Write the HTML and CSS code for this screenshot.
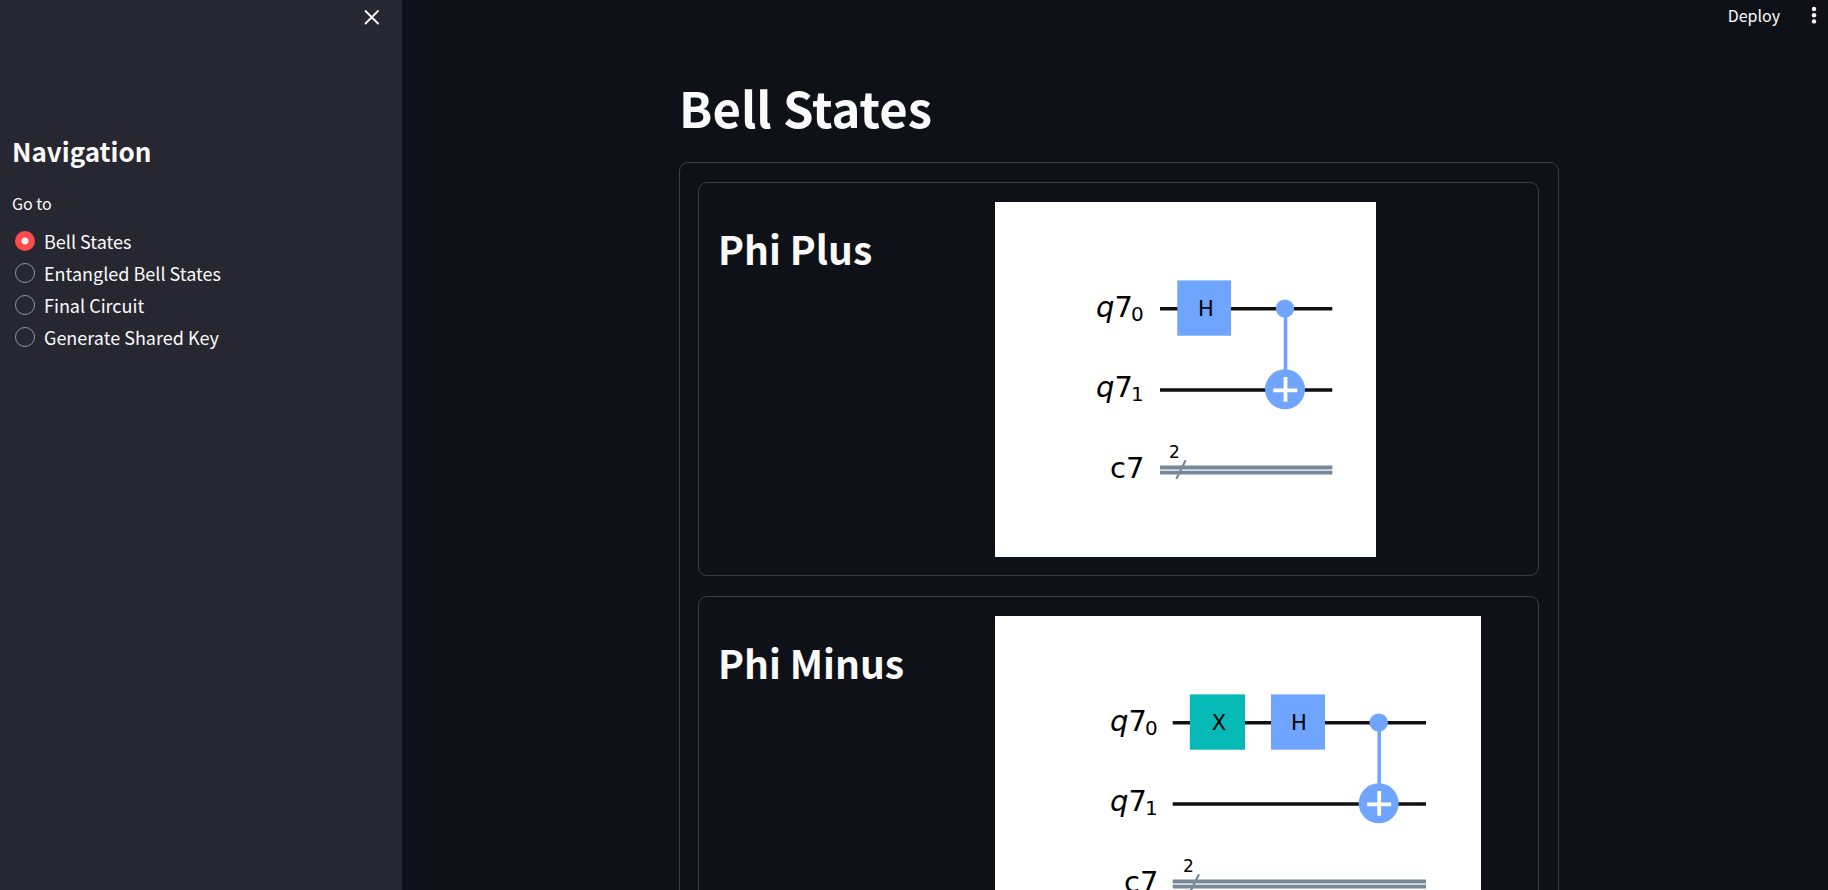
FILE: index.html
```html
<!DOCTYPE html>
<html lang="en">
<head>
<meta charset="utf-8">
<meta name="viewport" content="width=device-width, initial-scale=1">
<title>Bell States</title>
<link rel="stylesheet" href="styles.css">
</head>
<body>
<div class="app">
  <aside class="sidebar">
    <div class="sidebar-head">
      <button class="icon-button" type="button" aria-label="Close sidebar">
        <svg width="16" height="16" viewBox="0 0 16 16" fill="none" stroke="currentColor" stroke-width="1.8" stroke-linecap="round"><path d="M1.5 2 14 14.5M14 2 1.5 14.5"/></svg>
      </button>
    </div>
    <h2 class="nav-title">Navigation</h2>
    <fieldset class="nav-group">
      <legend class="nav-legend">Go to</legend>
      <label class="nav-option"><input class="nav-radio" type="radio" name="page" checked>Bell States</label>
      <label class="nav-option"><input class="nav-radio" type="radio" name="page">Entangled Bell States</label>
      <label class="nav-option"><input class="nav-radio" type="radio" name="page">Final Circuit</label>
      <label class="nav-option"><input class="nav-radio" type="radio" name="page">Generate Shared Key</label>
    </fieldset>
  </aside>
  <div class="page">
    <header class="toolbar">
      <button class="deploy" type="button">Deploy</button>
      <button class="icon-button" type="button" aria-label="Main menu">
        <svg width="6" height="18" viewBox="0 0 6 18" fill="currentColor"><circle cx="3" cy="3" r="2.2"/><circle cx="3" cy="9.2" r="2.2"/><circle cx="3" cy="15.4" r="2.2"/></svg>
      </button>
    </header>
    <main class="content">
      <h1 class="title">Bell States</h1>
      <div class="panel">
        <section class="card">
          <h2 class="card-title">Phi Plus</h2>
          <svg class="circuit" width="381" height="355" viewBox="0 0 381 355" role="img" aria-label="Phi Plus circuit">
            <path class="wire" d="M165 106.7H337.3M165 188H337.3"/>
            <path class="bus-fill" d="M165 268H337.3"/>
            <path class="bus" d="M165 265.4H337.3M165 270.7H337.3"/>
            <path class="slash" d="M181.3 277 190.6 258.3"/>
            <rect class="gate-h" x="182.3" y="78.4" width="53.7" height="55.3"/>
            <path class="control" d="M290.5 106.7V188"/>
            <circle class="gate-h" cx="290" cy="106.6" r="9.2"/>
            <circle class="gate-h" cx="290" cy="187.3" r="20"/>
            <path class="plus" d="M278.3 188.3H302.3M290.5 175V199.8"/>
            <text class="label" x="101" y="115"><tspan class="var">q</tspan>7</text>
            <text class="sub" x="136" y="119">0</text>
            <text class="label" x="101" y="195"><tspan class="var">q</tspan>7</text>
            <text class="sub" x="136" y="199">1</text>
            <text class="label" x="115" y="276">c7</text>
            <text class="count" x="174" y="256">2</text>
            <text class="gate-label" x="211" y="114">H</text>
          </svg>
        </section>
        <section class="card">
          <h2 class="card-title">Phi Minus</h2>
          <svg class="circuit" width="486" height="355" viewBox="0 0 486 355" role="img" aria-label="Phi Minus circuit">
            <path class="wire" d="M177.7 106.7H431M177.7 188H431"/>
            <path class="bus-fill" d="M177.7 268H431"/>
            <path class="bus" d="M177.7 265.4H431M177.7 270.7H431"/>
            <path class="slash" d="M194.6 277 204 258.3"/>
            <rect class="gate-x" x="194.8" y="78.4" width="55.2" height="55.3"/>
            <rect class="gate-h" x="276" y="78.4" width="54" height="55.3"/>
            <path class="control" d="M384.2 106.7V188"/>
            <circle class="gate-h" cx="383.7" cy="106.6" r="9.2"/>
            <circle class="gate-h" cx="383.7" cy="187.3" r="20"/>
            <path class="plus" d="M372.2 188.3H396.2M384.2 175V199.8"/>
            <text class="label" x="115" y="115"><tspan class="var">q</tspan>7</text>
            <text class="sub" x="150" y="119">0</text>
            <text class="label" x="115" y="195"><tspan class="var">q</tspan>7</text>
            <text class="sub" x="150" y="199">1</text>
            <text class="label" x="129" y="276">c7</text>
            <text class="count" x="188" y="256">2</text>
            <text class="gate-label" x="224" y="114">X</text>
            <text class="gate-label" x="304" y="114">H</text>
          </svg>
        </section>
      </div>
    </main>
  </div>
</div>
</body>
</html>
```
FILE: styles.css
```css
* {
  box-sizing: border-box;
}

body {
  margin: 0;
  background: #0e1117;
  color: #fafafa;
  font-family: "Noto Sans CJK SC", "Noto Sans", sans-serif;
  font-size: 18px;
}

h1,
h2 {
  margin: 0;
}

.app {
  display: flex;
  height: 100vh;
}

.sidebar {
  flex: 0 0 22%;
  padding: 0 12px;
  background: #262730;
}

.sidebar-head {
  display: flex;
  justify-content: flex-end;
  height: 127px;
  padding: 5px 10px;
}

.icon-button {
  display: flex;
  align-items: center;
  justify-content: center;
  height: 24px;
  padding: 0;
  border: 0;
  background: none;
  color: inherit;
  cursor: pointer;
}

.nav-title {
  font-size: 26px;
  font-weight: 700;
  line-height: 48px;
}

.nav-group {
  display: flex;
  flex-direction: column;
  margin: 0;
  padding: 0;
  border: 0;
}

.nav-legend {
  padding: 16px 0 10px;
  font-size: 16px;
  line-height: 24px;
}

.nav-option {
  display: flex;
  align-items: center;
  gap: 9px;
  padding-left: 3px;
  line-height: 32px;
  cursor: pointer;
}

.nav-radio {
  appearance: none;
  width: 20px;
  height: 20px;
  margin: 0;
  border: 1px solid #93949b;
  border-radius: 50%;
}

.nav-radio:checked {
  border: 0;
  background: radial-gradient(circle, #f4f0f6 3px, #ff4b4b 4px);
}

.page {
  flex: 1;
  min-width: 0;
  overflow-y: auto;
  scrollbar-width: none;
}

.toolbar {
  display: flex;
  align-items: center;
  justify-content: flex-end;
  gap: 31px;
  height: 30px;
  padding-right: 11px;
}

.deploy {
  padding: 0;
  border: 0;
  background: none;
  color: inherit;
  font-family: inherit;
  font-size: 16px;
  line-height: 24px;
  cursor: pointer;
}

.content {
  max-width: 888px;
  margin: 0 auto;
  padding: 43px 0 0 8px;
}

.title {
  padding-bottom: 21px;
  font-size: 49px;
  font-weight: 700;
  line-height: 68px;
}

.panel {
  display: flex;
  flex-direction: column;
  gap: 20px;
  padding: 19px 19px 19px 18px;
  border: 1px solid #3b3d42;
  border-radius: 9px;
}

.card {
  display: grid;
  grid-template-columns: minmax(0, 1fr) minmax(0, 2fr);
  gap: 15px;
  padding: 19px 18px 18px 19px;
  border: 1px solid #3b3d42;
  border-radius: 9px;
}

.card-title {
  padding-top: 18px;
  font-size: 39px;
  font-weight: 700;
  line-height: 56px;
}

.circuit {
  display: block;
  max-width: 100%;
  background: #fff;
  font-family: "DejaVu Sans", sans-serif;
}

.wire {
  stroke: #111;
  stroke-width: 3.6;
}

.bus {
  stroke: #778899;
  stroke-width: 3.6;
}

.bus-fill {
  stroke: #d5dce2;
  stroke-width: 4;
}

.slash {
  stroke: #778899;
  stroke-width: 2.2;
}

.gate-h {
  fill: #6fa4ff;
}

.gate-x {
  fill: #05bab6;
}

.control {
  stroke: #6fa4ff;
  stroke-width: 3.6;
}

.plus {
  stroke: #fff;
  stroke-width: 3.8;
}

.label {
  font-size: 29px;
}

.var {
  font-style: italic;
}

.sub {
  font-size: 20px;
}

.count {
  font-size: 17px;
}

.gate-label {
  font-size: 21px;
  text-anchor: middle;
}
```
